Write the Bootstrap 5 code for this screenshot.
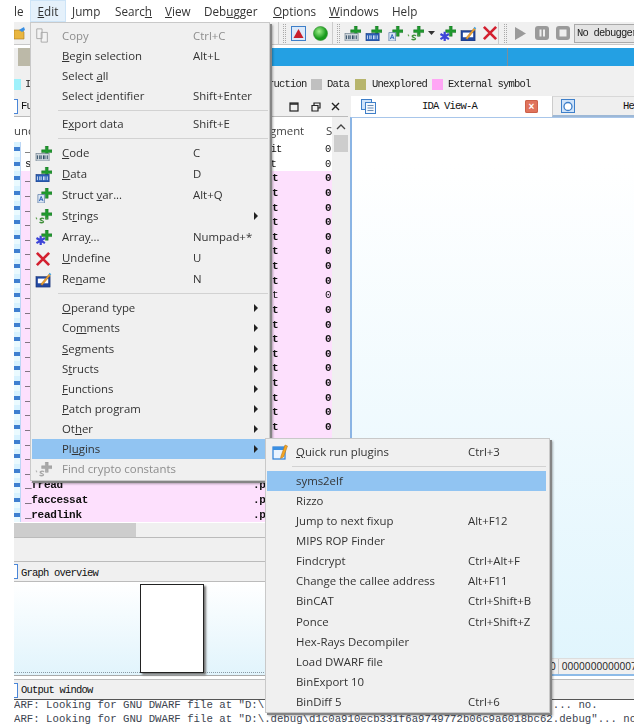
<!DOCTYPE html>
<html lang="en">
<head>
<meta charset="utf-8">
<title>IDA</title>
<link href="https://cdn.jsdelivr.net/npm/bootstrap@5.3.0/dist/css/bootstrap.min.css" rel="stylesheet">
<style>
html,body{background:#fff;margin:0;height:725px;overflow:hidden}
.shot{position:relative;width:641px;height:725px;overflow:hidden;font-family:"Open Sans","Liberation Sans",Arial,sans-serif;font-size:11.4px;color:#333;filter:blur(.35px)}
.appwin{margin-left:14px;width:620px;height:725px;display:flex;flex-direction:column;overflow:hidden}
.mbar{height:22px;display:flex;align-items:center;font-size:11.7px;color:#333;flex:none}
.mbar span{display:block;line-height:22px;white-space:nowrap}
.mbar .hot{background:#e5f1fb;outline:1px solid #cde4f7;outline-offset:-1px}
.tbar{height:23px;background:#f0f0f0;border-bottom:1px solid #c8c8c8;flex:none;display:flex;align-items:center}
.tbar svg{flex:none}
.grip{width:3px;height:19px;border-left:1px dotted #aaa;border-right:1px dotted #aaa;flex:none}
.vsep{width:1px;height:23px;background:#ccc;flex:none}
.combo{flex:none;width:62px;height:19px;background:#e4e4e4;border:1px solid #aaa;font:10.5px/17px "Liberation Mono",monospace;letter-spacing:-.8px;color:#222;padding-left:2px;white-space:nowrap;overflow:hidden;margin-left:4px}
.navband{height:18px;margin-top:3px;background:#24a0e3;flex:none;position:relative}
.navband i{position:absolute;display:block;top:0;bottom:0}
.legend{height:30px;background:#f0f0f0;flex:none;font:10.5px/1 "Liberation Mono",monospace;letter-spacing:-.8px;color:#222;white-space:nowrap;position:relative}
.swatch{display:block;width:11px;height:11px;position:absolute;top:13px}
.legend em{font-style:normal;position:absolute;top:13px}
.panes{flex:none;height:580px;background:#f0f0f0;display:flex}
.leftcol{width:334px;flex:none;display:flex;flex-direction:column;background:#f0f0f0}
.rightcol{width:286px;margin-left:3px;flex:none;display:flex;flex-direction:column}
.ptitle{height:21px;display:flex;align-items:center;font:10.5px/1 "Liberation Mono",monospace;letter-spacing:-.8px;color:#111;border-bottom:1px solid #bbb;flex:none;position:relative;white-space:nowrap}
.ptitle b{font-weight:400;position:absolute;top:5px}
.ptitle.gr{border-top:1px solid #bbb}
.ptitle.gr b{top:6px}
.tabbox{display:block;width:4px;height:15px;border:1px solid #4a86d8;border-left:0;background:#fff}
.listzone{display:flex;flex:none;height:406px}
.listcol{width:318px;flex:none;display:flex;flex-direction:column}
.thead{height:25px;background:#fff;flex:none;position:relative;font-size:11.4px;line-height:27px;color:#444}
.thead span{position:absolute;top:0}
.rows{height:381px;overflow:hidden;background:#fff}
.frow{height:14.64px;display:flex;font:10.5px/14.64px "Liberation Mono",monospace;letter-spacing:-.8px;color:#111;position:relative;white-space:nowrap;background:#fff}
.frow.pk{background:#fde0fd;font:700 11px/14.64px "Liberation Mono",monospace;letter-spacing:-.3px}
.frow .ic{width:6px;flex:none;background:repeating-linear-gradient(#d8f2ff 0,#d8f2ff 5px,#3f7fd0 5px,#3f7fd0 9px,#eafaff 9px,#eafaff 14.64px);box-shadow:1px 0 0 #bcd7f5}
.frow .nm{position:absolute;left:11px}
.frow .sg{position:absolute;left:240px}
.frow.pk .sg{left:239px}
.frow .st{position:absolute;left:311px}
.frow .sg.lt,.frow .st.lt{font-weight:400}
.vscroll{width:15px;margin-left:1px;flex:none;background:#f0f0f0;display:flex;flex-direction:column;align-items:center}
.vscroll .thumb{width:14px;height:17px;background:#cdcdcd;margin-top:5px}
.hscroll{height:14px;background:#f0f0f0;flex:none}
.hscroll div{width:122px;height:14px;background:#cdcdcd}
.gap1{height:24px;flex:none;border-top:1px solid #bbb}
.ovw{height:94px;flex:none;background:linear-gradient(#fff,#e1f4fc);position:relative;border-bottom:1px solid #aaa}
.ovw .dots{position:absolute;left:0;right:0;top:90px;border-top:1px dotted #8a9aa5}
.ovw .page{position:absolute;left:126px;top:2px;width:64px;height:89px;background:#fff;border:1px solid #222;box-shadow:2px 2px 2px #777}
.rtabs{height:21px;display:flex;flex:none;font:10.5px/21px "Liberation Mono",monospace;letter-spacing:-.8px;color:#111;white-space:nowrap}
.rt1{width:201px;background:#fff;position:relative;text-align:center;padding-right:4px}
.rt2{flex:1;background:#efefef;border-top:1px solid #d8d8d8;border-bottom:2px solid #9db8d6;border-left:1px solid #ccc;position:relative;overflow:hidden}
.rt1 svg,.rt2 svg{position:absolute}
.xbtn{position:absolute;left:174px;top:4px;width:13px;height:13px;background:#e0735c;border-radius:2px;color:#fff;letter-spacing:0;font:700 10px/13px "Liberation Sans",sans-serif;text-align:center;box-shadow:inset 0 0 0 1px #cc6048}
.rview{flex:none;height:559px;margin-left:-1px;border-left:2px solid #8ab4e4;border-top:1px solid #a8c6ea;background:linear-gradient(#fff 8%,#e0f5fd);display:flex;flex-direction:column;justify-content:flex-end}
.rstat{height:18px;background:#f0f0f0;border-top:1px solid #ddd;border-bottom:2px solid #8dbbe8;font-size:10.1px;line-height:15px;white-space:nowrap;overflow:hidden;color:#222;padding-left:198px;display:flex}
.rstat span+span{border-left:1px solid #ccc;margin-left:2px;padding-left:3px}
.outtitle{height:21px;font:10.5px/21px "Liberation Mono",monospace;letter-spacing:-.8px;color:#111;flex:none;position:relative;padding-left:7px;background:#f0f0f0;border-top:1px solid #bbb;border-bottom:1px solid #555;margin-top:3px}
.outtitle .tabbox{position:absolute;left:0;top:3px}
.outtxt{flex:1;background:#fff;font:10.7px/13.5px "Liberation Mono",monospace;color:#3c4450;white-space:pre;overflow:hidden;margin-top:-1px;position:relative;z-index:-1}
.menu-a.dropdown-menu,.menu-b.dropdown-menu{position:absolute;display:block;background:#f0f0f0;border:1px solid #c9c9c9;border-radius:0;padding:0;margin:0;min-width:0;font-size:11.4px;color:#333;box-shadow:2px 2px 0 #858585,3px 3px 2px rgba(0,0,0,.3)}
.menu-a{left:30px;top:22px;width:240px;height:459px;padding-top:2px!important}
.menu-b{left:265px;top:438px;width:285px;height:275px;padding-top:2px!important}
.mi.dropdown-item{position:relative;display:flex;align-items:center;padding:0 0 0 30px;height:20.15px;line-height:20px;color:#333;font-size:11.4px;white-space:nowrap;background:transparent;margin:0 0 0 1px;width:auto}
.menu-b .mi.dropdown-item{margin-right:3px}
.mi.tall{height:21px}
.mi .sc{position:absolute;left:161px}
.mi.dim{color:#8d8d8d}
.mi.sel{background:#91c4f2}
.mi .arr{position:absolute;left:222px;top:6px;width:0;height:0;border-left:4px solid #222;border-top:4px solid transparent;border-bottom:4px solid transparent}
.mi svg{position:absolute;left:3px;top:3px}
.menu-b .mi.dropdown-item{padding-left:29px}
.menu-b .mi .sc{left:201px}
.menu-b .mi svg{left:5px;top:2px}
.msep.dropdown-divider{margin:3.5px 1px 3.5px 27px;border-top:1px solid #d2d2d2;opacity:1}
.msep.low{margin-bottom:4.2px}
.msep.sub{margin:4px 3px 3.5px 26px}
u{text-underline-offset:1px}
</style>
</head>
<body>
<svg width="0" height="0" class="d-none">
<defs>
<g id="plus"><path d="M11 0h3v4h4v3h-4v4h-3V7H7V4h4z" fill="#1f9a2e" stroke="#0d5d18" stroke-width=".4"/></g>
<g id="i-code"><use href="#plus"/><rect x="1" y="8" width="14" height="8" fill="#cfd6dc" stroke="#6d7f8d" stroke-width=".7"/><path d="M2.500 10v4M5 10v4M6.500 10v4M9 10v4M10.500 10v4M13 10v4" stroke="#27445e" stroke-width="1"/></g>
<g id="i-data"><use href="#plus"/><rect x="1" y="8" width="14" height="8" fill="#2a5fb5" stroke="#1d3f85" stroke-width=".7"/><path d="M2.500 10v4M5 10v4M6.500 10v4M9 10v4M10.500 10v4M13 10v4" stroke="#dbe7f8" stroke-width="1"/></g>
<g id="i-struct"><use href="#plus"/><path d="M3 7h7v9H3z" fill="#dfe9f5" stroke="#5d7da8" stroke-width=".8"/><path d="M4.500 14l2-5 2 5M5.300 12.500h2.500" fill="none" stroke="#2a5fb5" stroke-width="1"/></g>
<g id="i-str"><use href="#plus"/><path d="M1 9l1 2M13 9l-1 2" stroke="#5aa04a" stroke-width="1.200"/><path d="M9.500 10.500c-1-1-3.500-1-4 .3-.4 1.600 3.800 1.500 3.500 3-.3 1.200-3 1.200-4.200 0" fill="none" stroke="#3f8f3a" stroke-width="1.500"/></g>
<g id="i-arr"><use href="#plus"/><path d="M6 6v10M1.500 8.500l9 5.500M10.500 8.500l-9 5.500" stroke="#3d45d8" stroke-width="2.400"/></g>
<g id="i-x"><path d="M2 2l13 13M15 2L2 15" stroke="#d3202f" stroke-width="2.800"/></g>
<g id="i-ren"><rect x="1" y="5" width="15" height="11" fill="#2147a0" stroke="#17306f" stroke-width=".6"/><rect x="3" y="7" width="11" height="5" fill="#fff"/><path d="M6 13l9-11 1.500 1.200-8.800 11z" fill="#eda02f" stroke="#a6681a" stroke-width=".5"/><path d="M15 1.500l1.800 1.500" stroke="#3da5e8" stroke-width="1.500"/></g>
<g id="i-quick"><rect x="1" y="4" width="12" height="12" fill="#eaf4ff" stroke="#2b7fd8" stroke-width="1.200"/><rect x="1" y="4" width="12" height="3" fill="#3b8fe2"/><path d="M9 13l4-11 2.500 1-4 11-3 1.500z" fill="#f5a623" stroke="#b06f10" stroke-width=".5"/></g>
<g id="i-view"><rect x=".5" y=".5" width="10" height="10" fill="#cfe3fa" stroke="#3e7fc9"/><rect x="4.500" y="3.500" width="10" height="11" fill="#f4f8fd" stroke="#3e7fc9"/><path d="M6.500 6.500h6M6.500 9h6M6.500 11.500h6" stroke="#6a8db5"/></g>
<g id="i-hex"><rect x=".5" y=".5" width="13" height="13" fill="#cfe3fa" stroke="#3e7fc9"/><circle cx="7" cy="7.500" r="4" fill="#fff" stroke="#3e7fc9" stroke-width="1.300"/></g>
</defs>
</svg>
<div class="shot">
 <div class="appwin">
  <div class="mbar">
   <span style="width:16px">le</span>
   <span class="hot" style="width:36px;text-align:center"><u>E</u>dit</span>
   <span style="width:49px;padding-left:6px"><u>J</u>ump</span>
   <span style="width:50px">Searc<u>h</u></span>
   <span style="width:39px"><u>V</u>iew</span>
   <span style="width:69px">Deb<u>u</u>gger</span>
   <span style="width:56px"><u>O</u>ptions</span>
   <span style="width:63px"><u>W</u>indows</span>
   <span>Help</span>
  </div>
  <div class="tbar">
   <svg width="12" height="14" viewBox="0 0 12 14"><path d="M0 4h8l2 2v7H0z" fill="#e9b640" stroke="#a9781b" stroke-width=".6"/><path d="M5 4l5-3 1 3-3 2z" fill="#3b8fe2"/></svg>
   <span style="width:252px;flex:none"></span>
   <div class="vsep"></div>
   <span style="width:4px;flex:none"></span>
   <div class="grip"></div>
   <svg style="margin-left:5px" width="15" height="15" viewBox="0 0 15 15"><rect x=".5" y=".5" width="14" height="14" fill="#dbe9fa" stroke="#3e7fc9"/><path d="M7.500 3l5 9h-10z" fill="#c8202c"/></svg>
   <svg style="margin-left:7px" width="15" height="15" viewBox="0 0 15 15"><defs><radialGradient id="gg" cx=".4" cy=".35"><stop offset="0" stop-color="#9ef08a"/><stop offset="1" stop-color="#189a1c"/></radialGradient></defs><circle cx="7.500" cy="7.500" r="7" fill="url(#gg)" stroke="#2b8a2b" stroke-width=".6"/></svg>
   <div class="vsep" style="margin-left:4px"></div>
   <div class="grip" style="margin-left:4px"></div>
   <svg style="margin-left:4px" width="17" height="15" viewBox="0 0 18 16"><use href="#i-code"/></svg>
   <svg style="margin-left:4px" width="17" height="15" viewBox="0 0 18 16"><use href="#i-data"/></svg>
   <svg style="margin-left:4px" width="17" height="15" viewBox="0 0 18 16"><use href="#i-struct"/></svg>
   <svg style="margin-left:4px" width="17" height="15" viewBox="0 0 18 16"><use href="#i-str"/></svg>
   <svg style="margin-left:4px" width="7" height="4" viewBox="0 0 7 4"><path d="M0 0h7L3.500 4z" fill="#333"/></svg>
   <svg style="margin-left:4px" width="17" height="15" viewBox="0 0 18 16"><use href="#i-arr"/></svg>
   <svg style="margin-left:4px" width="17" height="15" viewBox="0 0 18 16"><use href="#i-ren"/></svg>
   <svg style="margin-left:5px" width="16" height="16" viewBox="0 0 17 17"><use href="#i-x"/></svg>
   <div class="vsep"></div>
   <div class="grip" style="margin-left:5px"></div>
   <svg style="margin-left:8px" width="11" height="13" viewBox="0 0 11 13"><path d="M0 0l11 6.500L0 13z" fill="#9a9a9a"/></svg>
   <svg style="margin-left:9px" width="14" height="14" viewBox="0 0 14 14"><rect width="14" height="14" rx="3" fill="#9a9a9a"/><path d="M4.500 3.500h2v7h-2zM8 3.500h2v7H8z" fill="#eee"/></svg>
   <svg style="margin-left:7px" width="14" height="14" viewBox="0 0 14 14"><rect width="14" height="14" rx="3" fill="#9a9a9a"/><rect x="3.500" y="3.500" width="7" height="7" fill="#eee"/></svg>
   <div class="combo">No debugger</div>
  </div>
  <div class="navband">
   <i style="left:0;width:4px;background:#f0f0f0"></i>
   <i style="left:4px;width:12px;background:#bcb9a8"></i>
   <i style="left:493px;width:1px;background:#7d8e9a"></i>
  </div>
  <div class="legend">
   <span class="swatch" style="left:0;width:7px;background:#9ff1fb"></span><em style="left:11px">I</em>
   <em style="left:254px">ruction</em>
   <span class="swatch" style="left:297px;background:#c0c0c0"></span><em style="left:313px">Data</em>
   <span class="swatch" style="left:341px;background:#b7b56d"></span><em style="left:358px">Unexplored</em>
   <span class="swatch" style="left:418px;background:#ffa6f5"></span><em style="left:434px">External symbol</em>
  </div>
  <div class="panes">
   <div class="leftcol">
    <div class="ptitle">
     <span class="tabbox"></span><b style="left:7px">Fu</b>
     <svg style="position:absolute;left:275px;top:6px" width="10" height="10" viewBox="0 0 10 10"><rect x="1" y="1" width="8" height="8" fill="none" stroke="#222" stroke-width="1.200"/><path d="M1 2h8" stroke="#222" stroke-width="1.500"/></svg>
     <svg style="position:absolute;left:297px;top:6px" width="10" height="10" viewBox="0 0 10 10"><path d="M3 3V1h6v5H7M1 3.500h6V9H1z" fill="none" stroke="#222" stroke-width="1.200"/></svg>
     <svg style="position:absolute;left:317px;top:6px" width="9" height="9" viewBox="0 0 9 9"><path d="M1 1l7 7M8 1L1 8" stroke="#222" stroke-width="1.400"/></svg>
    </div>
    <div class="listzone">
     <div class="listcol">
      <div class="thead"><span style="left:0">unc</span><span style="left:256px">gment</span><span style="left:312px">S</span></div>
      <div class="rows">
       <div class="frow"><span class="ic"></span><span class="nm">_</span><span class="sg">.init</span><span class="st">0</span></div>
       <div class="frow"><span class="ic"></span><span class="nm">s</span><span class="sg">.plt</span><span class="st">0</span></div>
       <div class="frow pk"><span class="ic"></span><span class="nm">_</span><span class="sg">.plt</span><span class="st">0</span></div>
       <div class="frow pk"><span class="ic"></span><span class="nm">_</span><span class="sg">.plt</span><span class="st">0</span></div>
       <div class="frow pk"><span class="ic"></span><span class="nm">_</span><span class="sg">.plt</span><span class="st">0</span></div>
       <div class="frow pk"><span class="ic"></span><span class="nm">_</span><span class="sg">.plt</span><span class="st">0</span></div>
       <div class="frow pk"><span class="ic"></span><span class="nm">_</span><span class="sg">.plt</span><span class="st">0</span></div>
       <div class="frow pk"><span class="ic"></span><span class="nm">_</span><span class="sg">.plt</span><span class="st">0</span></div>
       <div class="frow pk"><span class="ic"></span><span class="nm">_</span><span class="sg">.plt</span><span class="st">0</span></div>
       <div class="frow pk"><span class="ic"></span><span class="nm">_</span><span class="sg">.plt</span><span class="st">0</span></div>
       <div class="frow pk"><span class="ic"></span><span class="nm">_</span><span class="sg lt">.plt</span><span class="st lt">0</span></div>
       <div class="frow pk"><span class="ic"></span><span class="nm">_</span><span class="sg">.plt</span><span class="st">0</span></div>
       <div class="frow pk"><span class="ic"></span><span class="nm">_</span><span class="sg">.plt</span><span class="st">0</span></div>
       <div class="frow pk"><span class="ic"></span><span class="nm">_</span><span class="sg">.plt</span><span class="st">0</span></div>
       <div class="frow pk"><span class="ic"></span><span class="nm">_</span><span class="sg">.plt</span><span class="st">0</span></div>
       <div class="frow pk"><span class="ic"></span><span class="nm">_</span><span class="sg">.plt</span><span class="st">0</span></div>
       <div class="frow pk"><span class="ic"></span><span class="nm">_</span><span class="sg">.plt</span><span class="st">0</span></div>
       <div class="frow pk"><span class="ic"></span><span class="nm">_</span><span class="sg">.plt</span><span class="st">0</span></div>
       <div class="frow pk"><span class="ic"></span><span class="nm">_</span><span class="sg">.plt</span><span class="st">0</span></div>
       <div class="frow pk"><span class="ic"></span><span class="nm">_</span><span class="sg">.plt</span><span class="st">0</span></div>
       <div class="frow pk"><span class="ic"></span><span class="nm">_</span><span class="sg">.plt</span><span class="st">0</span></div>
       <div class="frow pk"><span class="ic"></span><span class="nm">_</span><span class="sg">.plt</span><span class="st">0</span></div>
       <div class="frow pk"><span class="ic"></span><span class="nm">_</span><span class="sg">.plt</span><span class="st">0</span></div>
       <div class="frow pk"><span class="ic"></span><span class="nm">_fread</span><span class="sg">.plt</span><span class="st">0</span></div>
       <div class="frow pk"><span class="ic"></span><span class="nm">_faccessat</span><span class="sg">.plt</span><span class="st">0</span></div>
       <div class="frow pk"><span class="ic"></span><span class="nm">_readlink</span><span class="sg">.plt</span><span class="st">0</span></div>
      </div>
     </div>
     <div class="vscroll">
      <svg style="margin-top:7px" width="10" height="6" viewBox="0 0 10 6"><path d="M1 5l4-4 4 4" fill="none" stroke="#444" stroke-width="1.300"/></svg>
      <div class="thumb"></div>
     </div>
    </div>
    <div class="hscroll"><div></div></div>
    <div class="gap1"></div>
    <div class="ptitle gr"><span class="tabbox"></span><b style="left:7px">Graph overview</b></div>
    <div class="ovw"><div class="dots"></div><div class="page"></div></div>
   </div>
   <div class="rightcol">
    <div class="rtabs">
     <div class="rt1"><svg style="left:10px;top:3px" width="15" height="15" viewBox="0 0 15 15"><use href="#i-view"/></svg>IDA View-A<span class="xbtn">×</span></div>
     <div class="rt2"><svg style="left:8px;top:2px" width="14" height="14" viewBox="0 0 14 14"><use href="#i-hex"/></svg><span style="position:absolute;left:70px;top:-1px">He</span></div>
    </div>
    <div class="rview">
     <div class="rstat"><span>0</span><span>00000000000078</span></div>
    </div>
   </div>
  </div>
  <div class="outtitle"><span class="tabbox"></span>Output window</div>
  <div class="outtxt">ARF: Looking for GNU DWARF file at "D:\.debug\d1c0a910ecb331f6a9749772b06c9a6.debug"... no.
ARF: Looking for GNU DWARF file at "D:\.debug\d1c0a910ecb331f6a9749772b06c9a6018bc62.debug"... no.</div>
 </div>

 <div class="dropdown-menu show menu-a">
  <a class="dropdown-item mi tall dim"><svg width="15" height="15" viewBox="0 0 17 17"><path d="M2 1h6v11H2zM7 5h7v11H7z" fill="#f3f3f3" stroke="#a5a5a5"/></svg><span>Copy</span><span class="sc">Ctrl+C</span></a>
  <a class="dropdown-item mi"><span><u>B</u>egin selection</span><span class="sc">Alt+L</span></a>
  <a class="dropdown-item mi"><span>Select <u>a</u>ll</span></a>
  <a class="dropdown-item mi"><span>Select <u>i</u>dentifier</span><span class="sc">Shift+Enter</span></a>
  <hr class="dropdown-divider msep">
  <a class="dropdown-item mi"><span>E<u>x</u>port data</span><span class="sc">Shift+E</span></a>
  <hr class="dropdown-divider msep">
  <a class="dropdown-item mi tall"><svg width="17" height="15" viewBox="0 0 18 16"><use href="#i-code"/></svg><span><u>C</u>ode</span><span class="sc">C</span></a>
  <a class="dropdown-item mi tall"><svg width="17" height="15" viewBox="0 0 18 16"><use href="#i-data"/></svg><span><u>D</u>ata</span><span class="sc">D</span></a>
  <a class="dropdown-item mi tall"><svg width="17" height="15" viewBox="0 0 18 16"><use href="#i-struct"/></svg><span>Struct <u>v</u>ar...</span><span class="sc">Alt+Q</span></a>
  <a class="dropdown-item mi tall"><svg width="17" height="15" viewBox="0 0 18 16"><use href="#i-str"/></svg><span>St<u>r</u>ings</span><span class="arr"></span></a>
  <a class="dropdown-item mi tall"><svg width="17" height="15" viewBox="0 0 18 16"><use href="#i-arr"/></svg><span>Arra<u>y</u>...</span><span class="sc">Numpad+*</span></a>
  <a class="dropdown-item mi tall"><svg width="16" height="16" viewBox="0 0 17 17"><use href="#i-x"/></svg><span><u>U</u>ndefine</span><span class="sc">U</span></a>
  <a class="dropdown-item mi tall"><svg width="17" height="16" viewBox="0 0 18 17"><use href="#i-ren"/></svg><span>Re<u>n</u>ame</span><span class="sc">N</span></a>
  <hr class="dropdown-divider msep low">
  <a class="dropdown-item mi"><span><u>O</u>perand type</span><span class="arr"></span></a>
  <a class="dropdown-item mi"><span>Co<u>m</u>ments</span><span class="arr"></span></a>
  <a class="dropdown-item mi"><span><u>S</u>egments</span><span class="arr"></span></a>
  <a class="dropdown-item mi"><span>S<u>t</u>ructs</span><span class="arr"></span></a>
  <a class="dropdown-item mi"><span><u>F</u>unctions</span><span class="arr"></span></a>
  <a class="dropdown-item mi"><span><u>P</u>atch program</span><span class="arr"></span></a>
  <a class="dropdown-item mi"><span>Ot<u>h</u>er</span><span class="arr"></span></a>
  <a class="dropdown-item mi sel"><span>Pl<u>u</u>gins</span><span class="arr"></span></a>
  <a class="dropdown-item mi dim"><svg width="17" height="15" viewBox="0 0 18 16" style="filter:grayscale(1) opacity(.6)"><use href="#i-str"/></svg><span>Find crypto constants</span></a>
 </div>

 <div class="dropdown-menu show menu-b">
  <a class="dropdown-item mi tall"><svg width="17" height="17" viewBox="0 0 17 17"><use href="#i-quick"/></svg><span><u>Q</u>uick run plugins</span><span class="sc">Ctrl+3</span></a>
  <hr class="dropdown-divider msep sub">
  <a class="dropdown-item mi sel"><span>syms2elf</span></a>
  <a class="dropdown-item mi"><span>Rizzo</span></a>
  <a class="dropdown-item mi"><span>Jump to next fixup</span><span class="sc">Alt+F12</span></a>
  <a class="dropdown-item mi"><span>MIPS ROP Finder</span></a>
  <a class="dropdown-item mi"><span>Findcrypt</span><span class="sc">Ctrl+Alt+F</span></a>
  <a class="dropdown-item mi"><span>Change the callee address</span><span class="sc">Alt+F11</span></a>
  <a class="dropdown-item mi"><span>BinCAT</span><span class="sc">Ctrl+Shift+B</span></a>
  <a class="dropdown-item mi"><span>Ponce</span><span class="sc">Ctrl+Shift+Z</span></a>
  <a class="dropdown-item mi"><span>Hex-Rays Decompiler</span></a>
  <a class="dropdown-item mi"><span>Load DWARF file</span></a>
  <a class="dropdown-item mi"><span>BinExport 10</span></a>
  <a class="dropdown-item mi"><span>BinDiff 5</span><span class="sc">Ctrl+6</span></a>
 </div>
</div>
<script src="https://cdn.jsdelivr.net/npm/bootstrap@5.3.0/dist/js/bootstrap.bundle.min.js"></script>
</body>
</html>
